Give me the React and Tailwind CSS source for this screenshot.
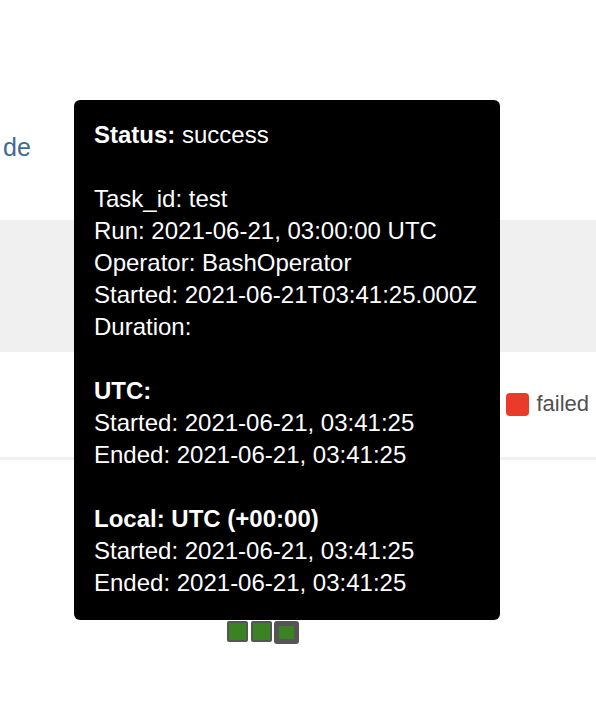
const FONT = { fontFamily: '"Liberation Sans", Arial, sans-serif' };

const LINES = [
  { bold: 'Status:', text: ' success' },
  null,
  { text: 'Task_id: test' },
  { text: 'Run: 2021-06-21, 03:00:00 UTC' },
  { text: 'Operator: BashOperator' },
  { text: 'Started: 2021-06-21T03:41:25.000Z' },
  { text: 'Duration: ' },
  null,
  { bold: 'UTC:' },
  { text: 'Started: 2021-06-21, 03:41:25' },
  { text: 'Ended: 2021-06-21, 03:41:25' },
  null,
  { bold: 'Local: UTC (+00:00)' },
  { text: 'Started: 2021-06-21, 03:41:25' },
  { text: 'Ended: 2021-06-21, 03:41:25' },
];

function TaskTooltip() {
  return (
    <div className="absolute left-[74px] top-[100px] w-[426px] rounded-[6px] bg-black px-[20px] pt-[19px] pb-[21px] text-[24px] leading-[32px] text-white">
      {LINES.map((line, i) =>
        line ? (
          <div key={i} className="whitespace-nowrap">
            {line.bold && <span className="font-bold">{line.bold}</span>}
            {line.text}
          </div>
        ) : (
          <div key={i} className="h-[32px]" />
        )
      )}
    </div>
  );
}

export default function App() {
  return (
    <div className="relative h-[710px] w-[596px] overflow-hidden bg-white" style={FONT}>
      <div className="h-[220px] pt-[131px] pl-[3px]">
        <span className="text-[25px] leading-[32px] text-[#3e6a96]">de</span>
      </div>

      <div className="h-[132px] bg-[#f0f0f0]" />

      <div className="flex h-[105px] items-start justify-end pt-[39px] pr-[7px]">
        <div className="flex items-center gap-[7px]">
          <span className="h-[23px] w-[23px] rounded-[4px] bg-[#ea3a2a]" />
          <span className="text-[22px] leading-[26px] text-[#51504f]">failed</span>
        </div>
      </div>

      <div className="h-[3px] bg-[#f0f0f0]" />

      <div className="flex items-start gap-[3px] pt-[161px] pl-[227px]">
        <span className="h-[21px] w-[21px] rounded-[2px] border-2 border-[#555555] bg-[#3b8223]" />
        <span className="h-[21px] w-[21px] rounded-[2px] border-2 border-[#555555] bg-[#3b8223]" />
        <span className="-ml-[1px] h-[23px] w-[25px] rounded-[3px] border-[5px] border-[#555555] bg-[#3b8223]" />
      </div>

      <TaskTooltip />
    </div>
  );
}
